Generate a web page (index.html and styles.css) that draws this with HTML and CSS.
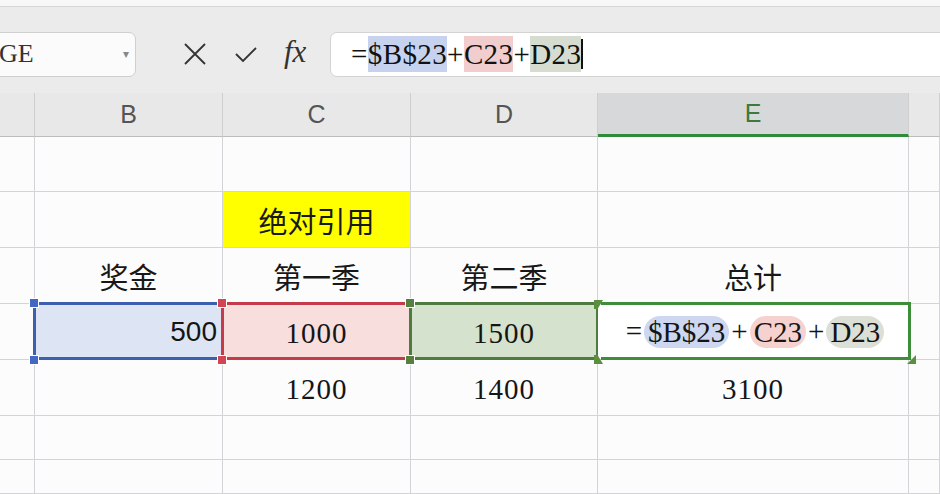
FILE: index.html
```html
<!DOCTYPE html>
<html>
<head lang="zh">
    <meta charset="UTF-8">
    <title>绝对引用</title>
    <link rel="stylesheet" href="styles.css">
</head>
<body>
<div class="topline"></div>
<div class="toolbar">
    <div class="namebox"><span class="name">GE</span><span class="drop">&#9662;</span></div>
    <div class="tools">
        <svg class="ico" width="26" height="26" viewBox="0 0 26 26"><path d="M3 3 L23 23 M23 3 L3 23" stroke="#333" stroke-width="1.8" fill="none"/></svg>
        <svg class="ico" width="26" height="26" viewBox="0 0 26 26"><path d="M3 13 L10 20 L23 7" stroke="#333" stroke-width="1.8" fill="none"/></svg>
        <span class="fx">fx</span>
    </div>
    <div class="formulabox">
        <span class="ftext">=<b class="hl blue">$B$23</b>+<b class="hl red">C23</b>+<b class="hl green">D23</b></span><i class="caret"></i>
    </div>
</div>

<div class="sheet">
    <!-- column headers -->
    <div class="ch"></div>
    <div class="ch">B</div>
    <div class="ch">C</div>
    <div class="ch">D</div>
    <div class="ch active">E</div>
    <div class="ch"></div>

    <!-- row 1 -->
    <div class="c"></div><div class="c"></div><div class="c"></div><div class="c"></div><div class="c"></div><div class="c"></div>

    <!-- row 2 -->
    <div class="c"></div><div class="c"></div>
    <div class="c cjk yellow">绝对引用</div>
    <div class="c"></div><div class="c"></div><div class="c"></div>

    <!-- row 3 -->
    <div class="c"></div>
    <div class="c cjk">奖金</div>
    <div class="c cjk">第一季</div>
    <div class="c cjk">第二季</div>
    <div class="c cjk">总计</div>
    <div class="c"></div>

    <!-- row 4: referenced ranges -->
    <div class="c"></div>
    <div class="c range rb right sans">500<i class="h tl"></i><i class="h bl"></i></div>
    <div class="c range rc num">1000<i class="h tl"></i><i class="h bl"></i></div>
    <div class="c range rd num">1500<i class="h tl"></i><i class="h bl"></i></div>
    <div class="c range re">
        <span class="expr">=<b class="pill blue">$B$23</b>+<b class="pill red">C23</b>+<b class="pill green">D23</b></span>
        <i class="t ttl"></i><i class="t tbl"></i><i class="t tbr"></i>
    </div>
    <div class="c"></div>

    <!-- row 5 -->
    <div class="c"></div><div class="c"></div>
    <div class="c num">1200</div>
    <div class="c num">1400</div>
    <div class="c num">3100</div>
    <div class="c"></div>

    <!-- row 6 -->
    <div class="c"></div><div class="c"></div><div class="c"></div><div class="c"></div><div class="c"></div><div class="c"></div>

    <!-- row 7 -->
    <div class="c"></div><div class="c"></div><div class="c"></div><div class="c"></div><div class="c"></div><div class="c"></div>
</div>
</body>
</html>
```

FILE: styles.css
```css
*{
    margin: 0;
    padding: 0;
    box-sizing: border-box;
}
html,body{
    width: 940px;
    height: 494px;
    overflow: hidden;
    background: #fcfcfd;
    font-family: "Liberation Sans", Arial, sans-serif;
    color: #151515;
}
.topline{
    height: 7px;
    background: #f7f7f7;
    border-bottom: 1px solid #d6d6d6;
}
.toolbar{
    height: 86px;
    background: #ebebeb;
    display: flex;
    align-items: center;
    padding-top: 8px;
}
.namebox{
    width: 143px;
    height: 45px;
    margin-left: -7px;
    background: #fbfbfb;
    border: 1px solid #cfcfcf;
    border-radius: 7px;
    display: flex;
    align-items: center;
    justify-content: space-between;
    padding: 0 6px 0 5px;
}
.name{
    font-family: "Liberation Serif", serif;
    font-size: 26px;
    color: #333;
}
.drop{
    font-size: 12px;
    color: #888;
}
.tools{
    display: flex;
    align-items: center;
    margin-left: 46px;
    width: 148px;
}
.ico{
    margin-right: 25px;
}
.fx{
    font-family: "Liberation Serif", serif;
    font-style: italic;
    font-size: 31px;
    color: #333;
    margin-top: -4px;
}
.formulabox{
    flex: 1;
    height: 45px;
    margin-right: -10px;
    background: #fff;
    border: 1px solid #d3d3d3;
    border-radius: 7px;
    display: flex;
    align-items: center;
    padding-left: 20px;
}
.ftext{
    font-family: "Liberation Serif", serif;
    font-size: 29px;
    letter-spacing: 0.4px;
    line-height: 36px;
    color: #111;
}
.hl{
    font-weight: normal;
    display: inline-block;
}
.hl.blue{ background: #c7d3ee; }
.hl.red{ background: #f2cdcd; }
.hl.green{ background: #d6ddd0; }
.caret{
    display: inline-block;
    width: 2px;
    height: 30px;
    background: #111;
}

.sheet{
    display: grid;
    grid-template-columns: 35px 188px 188px 187px 311px 31px;
    grid-template-rows: 44px 55px 56px 56px 56px 56px 44px 34px;
}
.ch{
    background: #e8e8e8;
    border-right: 1px solid #cfcfcf;
    border-bottom: 1px solid #bdbdbd;
    display: flex;
    align-items: center;
    justify-content: center;
    font-size: 25px;
    color: #555;
}
.ch.active{
    background: #d6d8da;
    color: #3b7a3b;
    border-bottom: 3px solid #2f8a3a;
}
.c{
    border-right: 1px solid #d4d4d8;
    border-bottom: 1px solid #d4d4d8;
    display: flex;
    align-items: center;
    justify-content: center;
    font-size: 28px;
}
.cjk{
    font-family: "Noto Sans CJK SC", sans-serif;
    font-size: 29px;
    color: #181818;
}
.yellow{
    background: #ffff00;
}
.num{
    font-family: "Liberation Serif", serif;
    font-size: 29px;
    letter-spacing: 1px;
    padding-top: 4px;
}
.sans{
    font-size: 28px;
}
.right{
    justify-content: flex-end;
    padding-right: 5px;
}

/* referenced ranges */
.range{
    position: relative;
}
.range::before{
    content: '';
    position: absolute;
    left: -2px;
    top: -2px;
    right: -2px;
    bottom: -1px;
    border: 3px solid var(--line);
    pointer-events: none;
}
.rb{ --line: #3c5fae; --knob: #4467c4; background: #dde5f5; }
.rc{ --line: #c43c49; --knob: #d24654; background: #f8dedd; }
.rd{ --line: #4f7a40; --knob: #55803f; background: #d5e2cd; }
.re{ --line: #3d8d3b; background: #fff; }
.re::before{
    left: 3px;
    right: -3px;
    border-left: none;
}
.h{
    position: absolute;
    width: 10px;
    height: 10px;
    background: var(--knob);
    border: 1px solid #fff;
    left: -6px;
    z-index: 2;
}
.h.tl{ top: -6px; }
.h.bl{ bottom: -6px; }
.t{
    position: absolute;
    width: 9px;
    height: 9px;
    background: #5a8f3f;
    z-index: 2;
}
.ttl{ left: -4px; top: -4px; clip-path: polygon(0 0, 100% 0, 40% 100%, 0 100%); }
.tbl{ left: -4px; bottom: -5px; clip-path: polygon(0 0, 40% 0, 100% 100%, 0 100%); }
.tbr{ right: -8px; bottom: -5px; clip-path: polygon(100% 0, 100% 100%, 0 100%); }
.expr{
    font-family: "Liberation Serif", serif;
    font-size: 29px;
    display: flex;
    align-items: center;
    gap: 2px;
    padding-left: 4px;
}
.pill{
    font-weight: normal;
    display: inline-block;
    padding: 0 4px;
    border-radius: 16px;
    line-height: 32px;
}
.pill.blue{ background: #cdd7f0; }
.pill.red{ background: #f5d2d0; }
.pill.green{ background: #dcdfd6; }
```
